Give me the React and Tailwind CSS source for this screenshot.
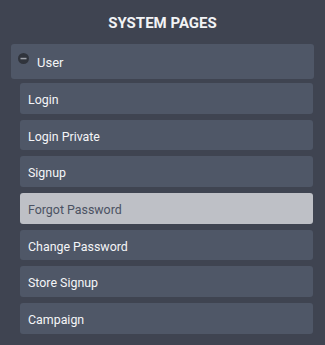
import React from 'react';

const pages = [
	'Login',
	'Login Private',
	'Signup',
	'Forgot Password',
	'Change Password',
	'Store Signup',
	'Campaign'
];

const App = () => {
	const active = 'Forgot Password';

	return (
		<div className="w-[325px] h-[345px] bg-[#3f4451] px-[11px] pt-[16px] overflow-hidden" style={{ fontFamily: 'Roboto, "Liberation Sans", sans-serif' }}>
			<h2 className="text-center text-[15px] leading-[15px] font-bold text-[#f2f3f5]">SYSTEM PAGES</h2>

			<div className="mt-[13px] h-[35px] bg-[#4f5767] rounded-[3px] flex items-start pl-[7px]">
				{/* collapse icon */}
				<svg width="11" height="11" viewBox="0 0 11 11" className="mt-[9px] shrink-0">
					<circle cx="5.5" cy="5.5" r="5.5" fill="#30343c" />
					<rect x="2.5" y="4.8" width="6" height="1.5" fill="#9ea2aa" />
				</svg>
				<span className="ml-[8px] mt-[12px] block text-[13px] leading-[13px] text-[#f4f5f7]">User</span>
			</div>

			<div className="mt-[4px] ml-[9px] mr-[1px] flex flex-col gap-[6px]">
				{pages.map((name) => (
					<div
						key={name}
						className={
							name === active
								? 'h-[30.67px] rounded-[3px] bg-[#bec0c6] pl-[8px] pt-[10px]'
								: 'h-[30.67px] rounded-[3px] bg-[#4f5767] pl-[8px] pt-[10px]'
						}
					>
						<span
							className={
								name === active
									? 'block text-[12.4px] leading-[13px] text-[#4b5262]'
									: 'block text-[12.4px] leading-[13px] text-[#f4f5f7]'
							}
						>
							{name}
						</span>
					</div>
				))}
			</div>
		</div>
	);
};

export default App;
